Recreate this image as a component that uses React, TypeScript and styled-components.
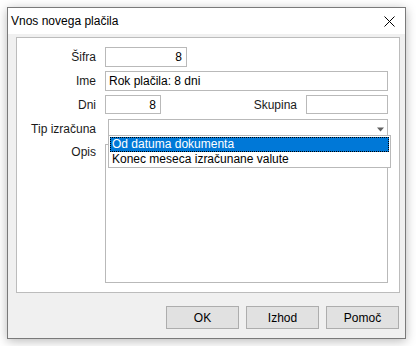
import styled, { createGlobalStyle } from 'styled-components'

const GlobalStyle = createGlobalStyle`
  html, body {
    margin: 0;
    padding: 0;
    background: #ffffff;
  }
  body {
    font-family: "Liberation Sans", Arial, sans-serif;
    font-size: 12px;
    color: #000;
  }
`

const Page = styled.div`
  width: 416px;
  height: 346px;
  padding: 7px 0 0 7px;
  box-sizing: border-box;
`

const Window = styled.div`
  width: 399px;
  height: 332px;
  box-sizing: border-box;
  border: 1px solid #7a7a7a;
  background: #f0f0f0;
  box-shadow: 0 2px 10px rgba(0, 0, 0, 0.28);
  display: flex;
  flex-direction: column;
`

const TitleBar = styled.div`
  height: 26px;
  background: #ffffff;
  display: flex;
  align-items: center;
  justify-content: space-between;
  padding: 0 0 0 3px;
  font-size: 12px;
`

const CloseBtn = styled.div`
  width: 46px;
  height: 26px;
  display: flex;
  align-items: center;
  justify-content: center;
  margin-right: -7px;
`

const Body = styled.div`
  flex: 1;
  display: flex;
  flex-direction: column;
  padding: 3px 5px 9px 8px;
`

const Panel = styled.div`
  height: 256px;
  box-sizing: border-box;
  background: #fff;
  border: 1px solid #bcbcbc;
  padding: 9px 0 0 0;
  display: flex;
  flex-direction: column;
  gap: 4px;
  position: relative;
`

const Row = styled.div<{ $h?: number; $mt?: number }>`
  display: flex;
  align-items: ${p => (p.$h && p.$h > 30 ? 'flex-start' : 'center')};
  height: ${p => p.$h ?? 20}px;
  margin-top: ${p => p.$mt ?? 0}px;
`

const Label = styled.div<{ $w?: number; $pt?: number }>`
  width: ${p => p.$w ?? 79}px;
  text-align: right;
  padding-right: 9px;
  padding-top: ${p => p.$pt ?? 0}px;
  color: #1a1a1a;
  flex-shrink: 0;
`

const Field = styled.div<{ $w: number; $align?: string; $mr?: number }>`
  width: ${p => p.$w}px;
  height: 100%;
  box-sizing: border-box;
  border: 1px solid #b9b9b9;
  background: #fff;
  margin-right: ${p => p.$mr ?? 0}px;
  display: flex;
  align-items: center;
  justify-content: ${p => (p.$align === 'right' ? 'flex-end' : 'flex-start')};
  padding: 0 4px 0 3px;
`

const Spacer = styled.div`
  flex: 1;
`

const Combo = styled.div`
  width: 280px;
  height: 100%;
  box-sizing: border-box;
  margin-left: 3px;
  border: 1px solid #b9b9b9;
  border-bottom: none;
  display: flex;
  align-items: center;
  justify-content: flex-end;
  padding-right: 2px;
`

const DropList = styled.div`
  position: absolute;
  left: 91px;
  top: 97px;
  width: 283px;
  height: 33px;
  box-sizing: border-box;
  background: #fff;
  border: 1px solid #b9b9b9;
  padding: 1px;
  z-index: 2;
`

const Item = styled.div<{ $sel?: boolean }>`
  height: 15px;
  line-height: 13px;
  box-sizing: border-box;
  padding-left: 1px;
  background: ${p => (p.$sel ? '#0078d7' : 'transparent')};
  color: ${p => (p.$sel ? '#fff' : '#000')};
  border: 1px ${p => (p.$sel ? 'dotted #000' : 'solid transparent')};
`

const TextArea = styled.div`
  width: 283px;
  height: 139px;
  box-sizing: border-box;
  border: 1px solid #b9b9b9;
  background: #fff;
`

const Footer = styled.div`
  display: flex;
  justify-content: flex-end;
  gap: 7px;
  margin-top: 13px;
  padding-right: 1px;
`

const Button = styled.div`
  width: 73px;
  height: 23px;
  box-sizing: border-box;
  background: #e1e1e1;
  border: 1px solid #adadad;
  display: flex;
  align-items: center;
  justify-content: center;
`

export default function App() {
  return (
    <Page>
      <GlobalStyle />
      <Window>
        <TitleBar>
          <span>Vnos novega plačila</span>
          <CloseBtn>
            <svg width="11" height="11" viewBox="0 0 11 11">
              <path d="M0.5 0.5 L10.5 10.5 M10.5 0.5 L0.5 10.5" stroke="#000" strokeWidth="1" />
            </svg>
          </CloseBtn>
        </TitleBar>
        <Body>
          <Panel>
            <Row>
              <Label>Šifra</Label>
              <Field $w={82} $align="right">8</Field>
            </Row>
            <Row>
              <Label>Ime</Label>
              <Field $w={283}>Rok plačila: 8 dni</Field>
            </Row>
            <Row $h={19}>
              <Label>Dni</Label>
              <Field $w={56} $align="right">8</Field>
              <Spacer />
              <Label $w={80}>Skupina</Label>
              <Field $w={82} $mr={11} />
            </Row>
            <Row $h={19} $mt={1}>
              <Label>Tip izračuna</Label>
              <Combo>
                <svg width="9" height="5" viewBox="0 0 9 5">
                  <path d="M1 0.5 L8 0.5 L4.5 4.5 Z" fill="#606060" />
                </svg>
              </Combo>
            </Row>
            <Row $h={139} $mt={2}>
              <Label $pt={1}>Opis</Label>
              <TextArea />
            </Row>
            <DropList>
              <Item $sel>Od datuma dokumenta</Item>
              <Item>Konec meseca izračunane valute</Item>
            </DropList>
          </Panel>
          <Footer>
            <Button>OK</Button>
            <Button>Izhod</Button>
            <Button>Pomoč</Button>
          </Footer>
        </Body>
      </Window>
    </Page>
  )
}
